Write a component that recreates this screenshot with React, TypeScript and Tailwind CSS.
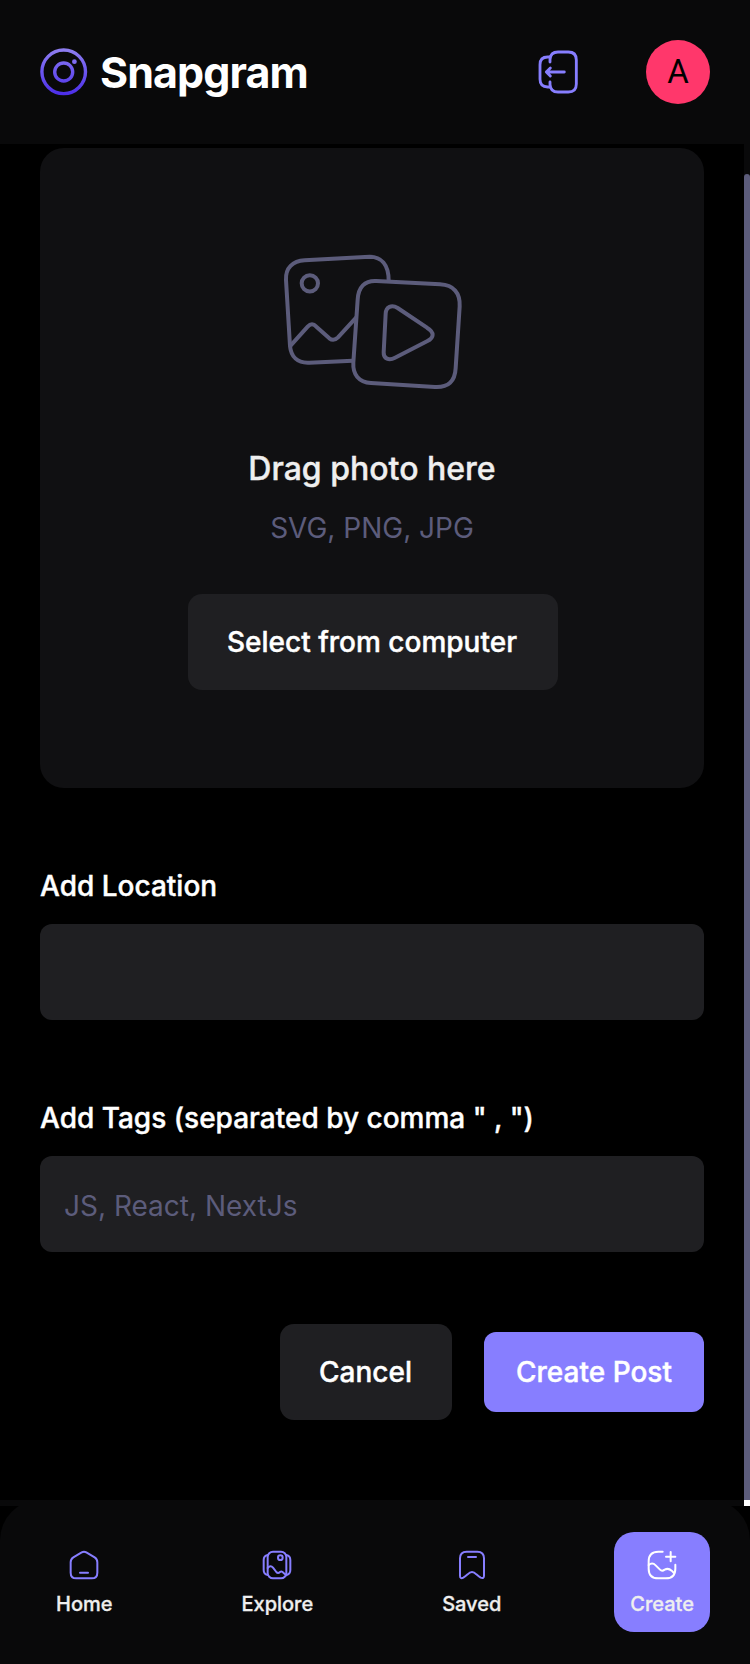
import type { ReactNode } from "react";

function LogoMark() {
  return (
    <svg width="48" height="48" viewBox="0 0 48 48" fill="none">
      <defs>
        <linearGradient id="logo" x1="24" y1="0" x2="24" y2="48" gradientUnits="userSpaceOnUse">
          <stop stopColor="#9080f0" />
          <stop offset="0.45" stopColor="#6f5af0" />
          <stop offset="1" stopColor="#4a2be8" />
        </linearGradient>
      </defs>
      <circle cx="23.7" cy="23.8" r="21.8" stroke="url(#logo)" strokeWidth="3.4" />
      <circle cx="23.7" cy="24" r="9" stroke="url(#logo)" strokeWidth="3.4" />
      <circle cx="34.4" cy="13.7" r="2.4" fill="#7f6cf0" />
    </svg>
  );
}

function LogoutIcon() {
  return (
    <svg width="48" height="48" viewBox="0 0 144 144" fill="none" stroke="#877eff" strokeWidth="8.5" strokeLinecap="round" strokeLinejoin="round">
      <path d="M48 42V35Q49 12 72 12H103Q127 12 127 36V108Q127 132 103 132H72Q49 132 48 109V102" />
      <path d="M48 27H41Q18 27 18 50V94Q18 117 41 117H48" />
      <path d="M91 72H37M49 60L37 72L49 84" />
    </svg>
  );
}

function UploadIcon() {
  return (
    <svg width="192" height="154" viewBox="48 15 576 462" fill="none" stroke="#5c5c7b" strokeWidth="12" strokeLinecap="butt" strokeLinejoin="round">
      <path d="M386 122C386 73 363 50 329 50L134 61C98 63 76 84 78 120L90 318C93 350 112 370 148 368L278 362" />
      <circle cx="149.500" cy="130" r="24.500" />
      <path d="M89 320L143 260Q156 246 169 260L208 295Q221 305 234 292L289 232" />
      <path d="M349 123L540 133C581 135 601 159 599 199L587 384C585 424 565 443 525 441L333 429C296 427 278 403 280 368L293 179C295 142 314 121 349 123Z" />
      <path d="M413 204L501 263C524 277 523 293 501 304L405 353C387 363 370 356 371 337L377 221C378 200 395 193 413 204Z" />
    </svg>
  );
}

function NavIcon({ children, color }: { children: ReactNode; color: string }) {
  return (
    <svg width="32" height="32" viewBox="0 0 96 96" fill="none" stroke={color} strokeWidth="6" strokeLinecap="round" strokeLinejoin="round">
      {children}
    </svg>
  );
}

const items = [
  {
    label: "Home",
    icon: (
      <>
        <path d="M41 10L16 25Q8 30 8 40V71Q8 88 25 88H71Q88 88 88 71V40Q88 30 80 25L55 10Q48 6 41 10Z" />
        <path d="M36 71H60" />
      </>
    ),
  },
  {
    label: "Explore",
    icon: (
      <>
        <rect x="20" y="8" width="56" height="80" rx="16" />
        <path d="M20 18Q8 20 8 33V63Q8 76 20 78M76 18Q88 20 88 33V63Q88 76 76 78" />
        <circle cx="58" cy="26" r="7" />
        <path d="M20 57L23 54Q30 49 36 56L46 69Q51 75 57 69Q62 65 67 71L76 79" />
      </>
    ),
  },
  {
    label: "Saved",
    icon: (
      <>
        <path d="M12 28Q12 8 32 8H64Q84 8 84 28V80Q84 90 74 86Q69 83 61 76Q48 62 35 76Q27 83 22 86Q12 91 12 80Z" />
        <path d="M36 24H60" />
      </>
    ),
  },
  {
    label: "Create",
    icon: (
      <>
        <path d="M50 8H37Q8 8 8 37V59Q8 88 37 88H59Q88 88 88 59V47" />
        <path d="M74 9V37M60 23H88" />
        <path d="M8 48Q19 39 29 49L42 62Q48 68 56 62Q67 56 77 65L84 72" />
      </>
    ),
  },
];

export default function App() {
  return (
    <div className="relative flex h-[1664px] w-[750px] flex-col overflow-hidden bg-black font-['Inter',sans-serif] text-white">
      <header className="flex h-36 shrink-0 items-center justify-between bg-[#09090a] px-10">
        <div className="flex items-center gap-3">
          <LogoMark />
          <span className="text-[43px] leading-[48px] font-bold tracking-[-0.95px]">Snapgram</span>
        </div>
        <div className="flex items-center gap-16">
          <LogoutIcon />
          <div className="flex size-16 items-center justify-center rounded-full bg-[#ff376b] font-['Roboto',sans-serif] text-[33px] text-black">A</div>
        </div>
      </header>

      <div className="flex h-[1356px] shrink-0">
        <main className="flex w-[744px] flex-col px-10 pt-1">
          <section className="flex h-[640px] w-[664px] flex-col items-center rounded-3xl bg-[#101012] pt-[97px]">
            <UploadIcon />
            <h3 className="mt-[47px] text-[32px] leading-[45px] font-medium text-[#efefef] [-webkit-text-stroke:0.4px]">Drag photo here</h3>
            <p className="mt-[17px] text-[28px] leading-10 text-[#5c5c7b]">SVG, PNG, JPG</p>
            <button className="mt-[46px] ml-px h-24 w-[370px] rounded-[14px] bg-[#1f1f22] pr-px text-[28px] font-medium [-webkit-text-stroke:0.4px]">Select from computer</button>
          </section>

          <label className="mt-[78px] text-[28px] leading-10 font-medium [-webkit-text-stroke:0.4px]">Add Location</label>
          <div className="mt-[18px] h-24 w-[664px] rounded-xl bg-[#1f1f22]" />

          <label className="mt-[78px] text-[28px] leading-10 font-medium [-webkit-text-stroke:0.4px]">Add Tags (separated by comma " , ")</label>
          <div className="mt-[18px] flex h-24 w-[664px] items-center rounded-xl bg-[#1f1f22] px-6 pt-1 text-[28px] text-[#5c5c7b]">JS, React, NextJs</div>

          <div className="mt-[72px] flex w-[664px] items-center justify-end gap-8">
            <button className="h-24 w-[172px] rounded-[14px] bg-[#1f1f22] pr-px text-[28px] font-medium [-webkit-text-stroke:0.4px]">Cancel</button>
            <button className="h-20 w-[220px] rounded-xl bg-[#877eff] text-[28px] font-medium [-webkit-text-stroke:0.4px]">Create Post</button>
          </div>
        </main>
        <div className="w-1.5 bg-[#09090a] pt-[30px]">
          <div className="h-full rounded-t-[3px] bg-[#5c5c7b]" />
        </div>
      </div>

      <nav className="flex h-[164px] shrink-0 items-start justify-between rounded-t-[40px] bg-[#09090a] px-10 pt-8">
        {items.map(({ label, icon }) => {
          const active = label === "Create";
          return (
            <a key={label} className={active ? "flex h-[100px] flex-col items-center gap-2 rounded-[20px] bg-[#877eff] px-4 pt-[17px]" : "flex h-[100px] flex-col items-center gap-2 px-4 pt-[17px]"}>
              <NavIcon color={active ? "#ffffff" : "#877eff"}>{icon}</NavIcon>
              <span className="pt-px text-xl leading-7 font-medium text-[#efefef] [-webkit-text-stroke:0.3px]">{label}</span>
            </a>
          );
        })}
      </nav>
      <div className="absolute top-[1500px] left-0 flex h-1.5 w-full bg-[#09090a]">
        <div className="ml-auto w-1.5 bg-white" />
      </div>
    </div>
  );
}
